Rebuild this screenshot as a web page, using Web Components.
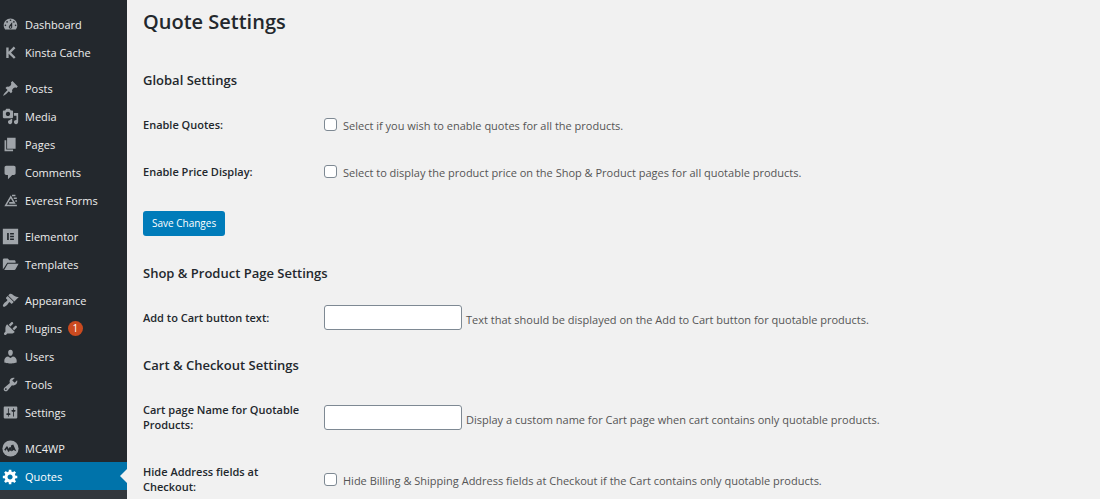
<!DOCTYPE html>
<html lang="en">
<head>
<meta charset="utf-8">
<meta name="viewport" content="width=device-width, initial-scale=1">
<title>Quote Settings</title>
<style>
  html, body {
    height: 100%;
    margin: 0;
  }

  body {
    background: #f1f1f1;
    color: #23282d;
    font: 11px/15px "Open Sans", "Noto Sans", sans-serif;
    overflow: hidden;
  }
</style>
</head>
<body>

<admin-layout>
  <admin-menu slot="menu">
    <menu-group>
      <menu-item icon="dashboard">Dashboard</menu-item>
      <menu-item icon="kinsta">Kinsta Cache</menu-item>
    </menu-group>
    <menu-group>
      <menu-item icon="post">Posts</menu-item>
      <menu-item icon="media">Media</menu-item>
      <menu-item icon="page">Pages</menu-item>
      <menu-item icon="comments">Comments</menu-item>
      <menu-item icon="everest">Everest Forms</menu-item>
    </menu-group>
    <menu-group>
      <menu-item icon="elementor">Elementor</menu-item>
      <menu-item icon="folder">Templates</menu-item>
    </menu-group>
    <menu-group>
      <menu-item icon="appearance">Appearance</menu-item>
      <menu-item icon="plugins" count="1">Plugins</menu-item>
      <menu-item icon="users">Users</menu-item>
      <menu-item icon="tools">Tools</menu-item>
      <menu-item icon="settings">Settings</menu-item>
    </menu-group>
    <menu-group>
      <menu-item icon="mc4wp">MC4WP</menu-item>
      <menu-item icon="generic" current>Quotes</menu-item>
    </menu-group>
  </admin-menu>

  <settings-page heading="Quote Settings">
    <settings-section heading="Global Settings">
      <setting-row type="checkbox" label="Enable Quotes:">Select if you wish to enable quotes for all the products.</setting-row>
      <setting-row type="checkbox" label="Enable Price Display:">Select to display the product price on the Shop &amp; Product pages for all quotable products.</setting-row>
      <save-button slot="actions">Save Changes</save-button>
    </settings-section>
    <settings-section heading="Shop &amp; Product Page Settings">
      <setting-row type="text" label="Add to Cart button text:">Text that should be displayed on the Add to Cart button for quotable products.</setting-row>
    </settings-section>
    <settings-section heading="Cart &amp; Checkout Settings">
      <setting-row type="text" label="Cart page Name for Quotable Products:">Display a custom name for Cart page when cart contains only quotable products.</setting-row>
      <setting-row type="checkbox" label="Hide Address fields at Checkout:">Hide Billing &amp; Shipping Address fields at Checkout if the Cart contains only quotable products.</setting-row>
    </settings-section>
  </settings-page>
</admin-layout>

<script>
// Icon shapes, all on a 20x20 grid
const icons = {
  dashboard: '<path d="M3.76 16h12.48c1.1-1.37 1.76-3.11 1.76-5 0-4.42-3.58-8-8-8s-8 3.58-8 8c0 1.89.66 3.63 1.76 5zM10 4c.55 0 1 .45 1 1s-.45 1-1 1-1-.45-1-1 .45-1 1-1zM6 6c.55 0 1 .45 1 1s-.45 1-1 1-1-.45-1-1 .45-1 1-1zm8 0c.55 0 1 .45 1 1s-.45 1-1 1-1-.45-1-1 .45-1 1-1zm-5.37 5.55L12 7v6c0 1.1-.9 2-2 2s-2-.9-2-2c0-.57.24-1.08.63-1.45zM4 10c.55 0 1 .45 1 1s-.45 1-1 1-1-.45-1-1 .45-1 1-1zm12 0c.55 0 1 .45 1 1s-.45 1-1 1-1-.45-1-1 .45-1 1-1zm-5 3c0-.55-.45-1-1-1s-1 .45-1 1 .45 1 1 1 1-.45 1-1z"/>',
  kinsta: '<g fill="none" stroke="currentColor" stroke-width="2.8"><path d="M6.400 4v12.500M14.800 4L8.600 10.200L15 16.500"/></g>',
  post: '<path d="M10.44 3.02l1.82-1.82 6.36 6.35-1.83 1.82c-1.05-.68-2.48-.57-3.41.36l-.75.75c-.92.93-1.04 2.35-.35 3.41l-1.83 1.82-2.41-2.41-2.8 2.79c-.42.42-3.38 2.71-3.8 2.29s1.86-3.39 2.28-3.81l2.79-2.79L4.1 9.36l1.83-1.82c1.05.69 2.48.57 3.4-.36l.75-.75c.93-.92 1.05-2.35.36-3.41z"/>',
  media: '<path d="M13 11V4c0-.55-.45-1-1-1h-1.67L9 1H5L3.67 3H2c-.55 0-1 .45-1 1v7c0 .55.45 1 1 1h10c.55 0 1-.45 1-1zM7 4.5c1.38 0 2.5 1.12 2.5 2.5S8.38 9.5 7 9.5 4.5 8.38 4.5 7 5.62 4.5 7 4.5zM14 6h5v10.5c0 1.38-1.12 2.5-2.5 2.5S14 17.88 14 16.5s1.12-2.5 2.5-2.5c.17 0 .34.02.5.05V9h-3V6zm-4 8.05V13h2v3.5c0 1.38-1.12 2.5-2.5 2.5S7 17.88 7 16.5 8.12 14 9.5 14c.17 0 .34.02.5.05z"/>',
  page: '<path d="M6 15V2h10v13H6zm-1 1h8v2H3V5h2v11z"/>',
  comments: '<path d="M5 2h9c1.1 0 2 .9 2 2v7c0 1.1-.9 2-2 2h-2l-5 5v-5H5c-1.1 0-2-.9-2-2V4c0-1.1.9-2 2-2z"/>',
  everest: '<g fill="none" stroke="currentColor" stroke-width="1.800"><path d="M17.500 15.800H4.300L10.300 5.600l4.200 7.200H8.500"/><path d="M11.800 4.200h4M13.800 7.400h3.600M15.600 10.600h2"/></g>',
  elementor: '<path fill-rule="evenodd" d="M1 1h18v18H1zM6 6v8h2V6zM9.500 6v1.700H14V6zM9.500 9.200v1.600H14V9.200zM9.500 12.300V14H14v-1.700z"/>',
  folder: '<path d="M1 15.500V4.500c0-.8.6-1.500 1.500-1.500h4.200l2 2h5.800c.8 0 1.500.7 1.500 1.500V8H6.200L2.800 13.200zM2.600 16.500L6.800 9.200H19.500l-3.600 6.400c-.3.600-.8.900-1.400.9z"/>',
  appearance: '<path d="M14.48 11.06L7.41 3.99l1.5-1.5c.5-.56 2.3-.47 3.51.32 1.21.8 1.43 1.28 2.91 2.1 1.18.64 2.45 1.26 4.45.85zm-.71.71L6.7 4.7 4.93 6.47c-.39.39-.39 1.02 0 1.41l1.06 1.06c.39.39.39 1.03 0 1.42-.6.6-1.43 1.11-2.21 1.69-.35.26-.7.53-1.01.84C1.43 14.23.4 16.08 1.4 17.07c.99 1 2.84-.03 4.18-1.36.31-.31.58-.66.85-1.02.57-.78 1.08-1.61 1.69-2.21.39-.39 1.02-.39 1.41 0l1.06 1.06c.39.39 1.02.39 1.41 0z"/>',
  plugins: '<path d="M13.11 4.36L9.87 7.6 8 5.73l3.24-3.24c.35-.34 1.05-.2 1.56.32.52.51.66 1.21.31 1.55zm-8 1.77l.91-1.12 9.01 9.01-1.19.84c-.71.71-2.63 1.16-3.82 1.16H6.14L4.9 17.26c-.59.59-1.54.59-2.12 0-.59-.58-.59-1.53 0-2.12l1.24-1.24v-3.88c0-1.13.4-3.19 1.09-3.89zm7.26 3.97l3.24-3.24c.34-.35 1.04-.21 1.55.31.52.51.66 1.21.31 1.55l-3.24 3.25z"/>',
  users: '<path d="M10 9.25c-2.27 0-2.73-3.44-2.73-3.44C7 4.02 7.82 2 9.97 2c2.16 0 2.98 2.02 2.71 3.81 0 0-.41 3.44-2.68 3.44zm0 2.57L12.72 10c2.39 0 4.52 2.33 4.52 4.53v2.49s-3.65 1.13-7.24 1.13c-3.65 0-7.24-1.13-7.24-1.13v-2.49c0-2.25 1.94-4.48 4.47-4.48z"/>',
  tools: '<path d="M16.68 9.77c-1.34 1.34-3.3 1.67-4.95.99l-5.41 6.52c-.99.99-2.59.99-3.58 0s-.99-2.59 0-3.57l6.52-5.42c-.68-1.65-.35-3.61.99-4.95 1.28-1.28 3.12-1.62 4.72-1.06l-2.89 2.89 2.82 2.82 2.86-2.87c.53 1.58.18 3.39-1.08 4.65zM3.81 16.21c.4.39 1.04.39 1.43 0 .4-.4.4-1.04 0-1.43-.39-.4-1.03-.4-1.43 0-.39.39-.39 1.03 0 1.43z"/>',
  settings: '<path d="M18 16V4c0-.55-.45-1-1-1H3c-.55 0-1 .45-1 1v12c0 .55.45 1 1 1h14c.55 0 1-.45 1-1zM8 11h1c.55 0 1 .45 1 1s-.45 1-1 1H8v1.5c0 .28-.22.5-.5.5s-.5-.22-.5-.5V13H6c-.55 0-1-.45-1-1s.45-1 1-1h1V5.5c0-.28.22-.5.5-.5s.5.22.5.5V11zm5-2h-1c-.55 0-1-.45-1-1s.45-1 1-1h1V5.5c0-.28.22-.5.5-.5s.5.22.5.5V7h1c.55 0 1 .45 1 1s-.45 1-1 1h-1v5.5c0 .28-.22.5-.5.5s-.5-.22-.5-.5V9z"/>',
  mc4wp: '<circle cx="10" cy="10" r="9.500"/><path fill="none" stroke="#23282d" stroke-width="2" stroke-linejoin="round" d="M3.400 12l2.400-3.600 2 4.400 1.700-3.600 1.300 3.400"/><path fill="#23282d" d="M10.400 6.600l2.800-1.200 3.600 7.800-3.200-1.400-2.400 1.800z"/>',
  generic: '<path d="M18 12h-2.18c-.17.7-.44 1.35-.81 1.93l1.54 1.54-2.1 2.1-1.54-1.54c-.58.36-1.23.63-1.91.79V19H8v-2.18c-.68-.16-1.33-.43-1.91-.79l-1.54 1.54-2.12-2.12 1.54-1.54c-.36-.58-.63-1.23-.79-1.91H1V9.03h2.17c.16-.7.44-1.35.8-1.94L2.43 5.55l2.1-2.1 1.54 1.54c.58-.37 1.24-.64 1.93-.81V2h3v2.18c.68.16 1.33.43 1.91.79l1.54-1.54 2.12 2.12-1.54 1.54c.36.59.64 1.24.8 1.94H18V12zm-8.5 1.5c1.66 0 3-1.34 3-3s-1.34-3-3-3-3 1.34-3 3 1.34 3 3 3z"/>'
};

class AdminLayout extends HTMLElement {
  constructor() {
    super();
    this.attachShadow({ mode: 'open' });
    this.shadowRoot.innerHTML = `
<style>
  :host {
    display: flex;
    min-height: 100%;
  }

  main {
    flex: 1;
    min-width: 0;
    padding: 9px 16px 0;
  }
</style>
<slot name="menu"></slot>
<main><slot></slot></main>
    `;
  }
}

class AdminMenu extends HTMLElement {
  constructor() {
    super();
    this.attachShadow({ mode: 'open' });
    this.shadowRoot.innerHTML = `
<style>
  :host {
    display: flex;
    flex-direction: column;
    flex: 0 0 127px;
    background: #23282d;
  }

  nav {
    display: flex;
    flex-direction: column;
    gap: 8px;
    padding-top: 10px;
  }

  /* top of the open submenu */
  .submenu {
    flex: 1;
    background: #32373c;
  }
</style>
<nav aria-label="Main menu"><slot></slot></nav>
<div class="submenu"></div>
    `;
  }
}

class MenuGroup extends HTMLElement {
  constructor() {
    super();
    this.attachShadow({ mode: 'open' });
    this.shadowRoot.innerHTML = `
<style>
  :host {
    display: flex;
    flex-direction: column;
  }
</style>
<slot></slot>
    `;
  }
}

class MenuItem extends HTMLElement {
  constructor() {
    super();
    this.attachShadow({ mode: 'open' });
  }

  connectedCallback() {
    const count = this.getAttribute('count');
    this.shadowRoot.innerHTML = `
<style>
  :host {
    display: block;
  }

  a {
    position: relative;
    display: flex;
    align-items: center;
    gap: 6px;
    height: 28px;
    padding-left: 2px;
    color: #eee;
    text-decoration: none;
  }

  svg {
    width: 17px;
    height: 17px;
    color: #a0a5aa;
    fill: currentColor;
  }

  .count {
    width: 15px;
    border-radius: 8px;
    background: #ca4a1f;
    color: #fff;
    font-size: 10px;
    text-align: center;
  }

  :host([current]) a {
    background: #0073aa;
    color: #fff;
  }

  :host([current]) svg {
    color: #fff;
  }

  :host([current]) a::after {
    content: "";
    position: absolute;
    right: 0;
    border: 7px solid transparent;
    border-left-width: 0;
    border-right-color: #f1f1f1;
  }
</style>
<a href="#">
  <svg viewBox="0 0 20 20" aria-hidden="true">${icons[this.getAttribute('icon')]}</svg>
  <slot></slot>
  ${count ? `<span class="count">${count}</span>` : ''}
</a>
    `;
  }
}

class SettingsPage extends HTMLElement {
  constructor() {
    super();
    this.attachShadow({ mode: 'open' });
    this.shadowRoot.innerHTML = `
<style>
  :host {
    display: block;
  }

  h1 {
    margin: 0 0 36px;
    font-size: 20px;
    font-weight: 600;
    line-height: 26px;
  }
</style>
<h1></h1>
<slot></slot>
    `;
  }

  connectedCallback() {
    this.shadowRoot.querySelector('h1').textContent = this.getAttribute('heading');
  }
}

class SettingsSection extends HTMLElement {
  constructor() {
    super();
    this.attachShadow({ mode: 'open' });
    this.shadowRoot.innerHTML = `
<style>
  :host {
    display: block;
    margin-bottom: 15px;
  }

  :host(:last-child) {
    margin-bottom: 0;
  }

  h2 {
    margin: 0 0 12px;
    font-size: 13px;
    font-weight: 600;
    line-height: 18px;
  }

  ::slotted([slot="actions"]) {
    margin: 16px 0 28px;
  }
</style>
<h2></h2>
<slot></slot>
<slot name="actions"></slot>
    `;
  }

  connectedCallback() {
    this.shadowRoot.querySelector('h2').textContent = this.getAttribute('heading');
  }
}

class SettingRow extends HTMLElement {
  constructor() {
    super();
    this.attachShadow({ mode: 'open' });
  }

  connectedCallback() {
    const type = this.getAttribute('type');
    this.shadowRoot.innerHTML = `
<style>
  :host {
    display: grid;
    grid-template-columns: 160px 1fr;
    column-gap: 21px;
    align-items: center;
    padding: 16px 0;
  }

  label {
    font-weight: 600;
  }

  .field {
    display: flex;
    align-items: center;
    gap: 6px;
    height: 15px;
    color: #555;
  }

  input {
    flex: none;
    appearance: none;
    box-sizing: border-box;
    margin: 0;
    border: 1px solid #7e8993;
    border-radius: 3px;
    background: #fff;
    font: inherit;
  }

  input[type="checkbox"] {
    width: 13px;
    height: 13px;
  }

  input[type="text"] {
    width: 138px;
    height: 25px;
    padding: 0 6px;
  }

  .text {
    gap: 4px;
  }

  .description {
    padding-top: 2px;
  }

  .text .description {
    padding-top: 4px;
  }
</style>
<label for="field">${this.getAttribute('label')}</label>
<div class="field ${type}">
  <input id="field" type="${type}" aria-describedby="description">
  <span class="description" id="description"><slot></slot></span>
</div>
    `;
  }
}

class SaveButton extends HTMLElement {
  constructor() {
    super();
    this.attachShadow({ mode: 'open' });
    this.shadowRoot.innerHTML = `
<style>
  :host {
    display: block;
  }

  button {
    display: block;
    height: 25px;
    padding: 0 9px;
    border: 0;
    border-radius: 3px;
    background: #007cba;
    color: #fff;
    font: inherit;
    font-size: 10px;
    cursor: pointer;
  }
</style>
<button type="button"><slot></slot></button>
    `;
  }
}

customElements.define('admin-layout', AdminLayout);
customElements.define('admin-menu', AdminMenu);
customElements.define('menu-group', MenuGroup);
customElements.define('menu-item', MenuItem);
customElements.define('settings-page', SettingsPage);
customElements.define('settings-section', SettingsSection);
customElements.define('setting-row', SettingRow);
customElements.define('save-button', SaveButton);
</script>
</body>
</html>
